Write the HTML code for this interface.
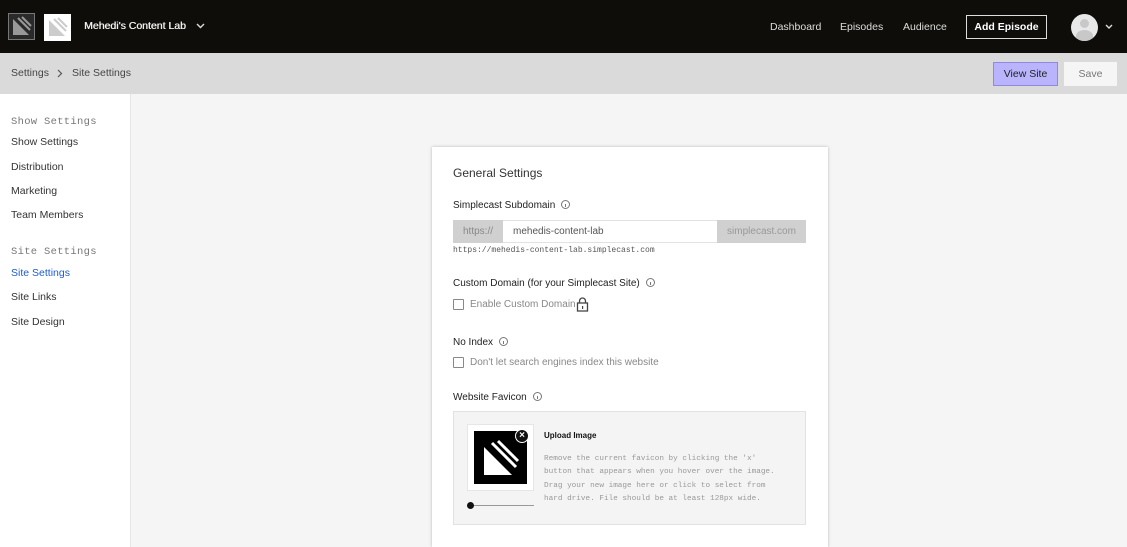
<!DOCTYPE html>
<html><head><meta charset="utf-8"><style>
*{box-sizing:border-box;margin:0;padding:0}
html{width:1127px;height:547px;overflow:hidden}
body{width:1127px;height:547px;overflow:hidden;font-family:"Liberation Sans",sans-serif;background:#f5f5f5;position:relative;color:#222}
.abs{position:absolute}
.top{left:0;top:0;width:1127px;height:53px;background:#0e0d0a}
.sub{left:0;top:53px;width:1127px;height:41px;background:#dadada}
.side{left:0;top:94px;width:131px;height:453px;background:#fff;border-right:1px solid #e6e6e6}
.t{position:absolute;white-space:nowrap}
.mono{font-family:"Liberation Mono",monospace}
.nav{color:#ddd;font-size:10.5px}
.sl{font-size:10.5px;color:#333;left:11px}
.sh{font-size:10.5px;color:#777;left:11px;letter-spacing:.3px}
.card{left:432px;top:147px;width:396px;height:400px;background:#fff;box-shadow:0 0 3px rgba(0,0,0,.25)}
.lbl{font-size:10px;color:#222}
.info{display:inline-block;width:9px;height:9px;border:1px solid #777;border-radius:50%;vertical-align:middle;margin-left:6px;position:relative;top:-1px}
.info:after{content:"";position:absolute;left:3px;top:3px;width:1px;height:3px;background:#777}
.cb{width:11px;height:11px;border:1px solid #888;border-radius:1px;background:#fff}
</style></head><body>
<div class="abs top"></div>
<div class="abs" style="left:8px;top:13px;width:27px;height:27px;border:1px solid #777;background:#2a2a2a">
<svg width="25" height="25" viewBox="0 0 25 25"><polygon points="4,5 4,21 20,21" fill="#999"/><line x1="9" y1="4" x2="21" y2="16" stroke="#999" stroke-width="2"/><line x1="13" y1="3" x2="22" y2="12" stroke="#999" stroke-width="2"/></svg></div>
<div class="abs" style="left:44px;top:14px;width:27px;height:27px;background:#fff">
<svg width="27" height="27" viewBox="0 0 27 27"><polygon points="5,6 5,22 21,22" fill="#ccc"/><line x1="10" y1="5" x2="22" y2="17" stroke="#ccc" stroke-width="2"/><line x1="14" y1="4" x2="23" y2="13" stroke="#ccc" stroke-width="2"/></svg></div>
<div class="t" style="left:84px;top:20px;font-size:10.5px;color:#eee;text-shadow:0.4px 0 0 #eee">Mehedi's Content Lab</div>
<svg class="abs" style="left:196px;top:23px" width="9" height="6"><polyline points="1,1 4.5,4.5 8,1" fill="none" stroke="#ddd" stroke-width="1.4"/></svg>
<div class="t nav" style="left:770px;top:21px">Dashboard</div>
<div class="t nav" style="left:840px;top:21px">Episodes</div>
<div class="t nav" style="left:903px;top:21px">Audience</div>
<div class="abs" style="left:966px;top:15px;width:81px;height:24px;border:1px solid #ddd;color:#fff;font-size:10.5px;font-weight:bold;text-align:center;line-height:22px">Add Episode</div>
<div class="abs" style="left:1071px;top:14px;width:27px;height:27px;border-radius:50%;background:#e8e8e8;overflow:hidden">
<div class="abs" style="left:9px;top:5px;width:9px;height:9px;border-radius:50%;background:#c8c8c8"></div>
<div class="abs" style="left:5px;top:16px;width:17px;height:12px;border-radius:50% 50% 0 0;background:#c8c8c8"></div></div>
<svg class="abs" style="left:1105px;top:24px" width="8" height="6"><polyline points="1,1 4,4 7,1" fill="none" stroke="#ddd" stroke-width="1.4"/></svg>

<div class="abs sub"></div>
<div class="t" style="left:11px;top:67px;font-size:10.5px;color:#444">Settings</div>
<svg class="abs" style="left:57px;top:69px" width="6" height="9"><polyline points="1,1 4.5,4.5 1,8" fill="none" stroke="#555" stroke-width="1.2"/></svg>
<div class="t" style="left:72px;top:67px;font-size:10.5px;color:#444">Site Settings</div>
<div class="abs" style="left:993px;top:62px;width:65px;height:24px;background:#b9b4fb;border:1px solid #8f89e0;font-size:10.5px;text-align:center;line-height:22px;color:#222">View Site</div>
<div class="abs" style="left:1064px;top:62px;width:53px;height:24px;background:#f5f5f5;font-size:10.5px;text-align:center;line-height:24px;color:#777">Save</div>

<div class="abs side"></div>
<div class="t sh mono" style="top:116px">Show Settings</div>
<div class="t sl" style="top:136px">Show Settings</div>
<div class="t sl" style="top:161px">Distribution</div>
<div class="t sl" style="top:185px">Marketing</div>
<div class="t sl" style="top:209px">Team Members</div>
<div class="t sh mono" style="top:246px">Site Settings</div>
<div class="t sl" style="top:267px;color:#1f5bd1">Site Settings</div>
<div class="t sl" style="top:291px">Site Links</div>
<div class="t sl" style="top:316px">Site Design</div>

<div class="abs card"></div>
<div class="t" style="left:453px;top:166px;font-size:12px;color:#333">General Settings</div>
<div class="t lbl" style="left:453px;top:200px">Simplecast Subdomain<span class="info"></span></div>
<div class="abs" style="left:453px;top:220px;width:353px;height:23px;border:1px solid #e2e2e2;background:#fff"></div>
<div class="abs" style="left:453px;top:220px;width:50px;height:23px;background:#d0d0d0;color:#888;font-size:10px;text-align:center;line-height:23px">https://</div>
<div class="t" style="left:513px;top:226px;font-size:10px;color:#555">mehedis-content-lab</div>
<div class="abs" style="left:717px;top:220px;width:89px;height:23px;background:#d0d0d0;color:#999;font-size:10px;text-align:center;line-height:23px">simplecast.com</div>
<div class="t mono" style="left:453px;top:246px;font-size:8px;color:#555">https://mehedis-content-lab.simplecast.com</div>
<div class="t lbl" style="left:453px;top:278px">Custom Domain (for your Simplecast Site)<span class="info"></span></div>
<div class="abs cb" style="left:453px;top:299px"></div>
<div class="t" style="left:470px;top:299px;font-size:10px;color:#888">Enable Custom Domain</div>
<svg class="abs" style="left:576px;top:297px" width="13" height="15" viewBox="0 0 13 15"><path d="M3.5 6V4a3 3 0 0 1 6 0v2" fill="none" stroke="#444" stroke-width="1.3"/><rect x="1.5" y="6" width="10" height="8" fill="none" stroke="#444" stroke-width="1.3"/><rect x="6" y="9" width="1.2" height="3" fill="#444"/></svg>
<div class="t lbl" style="left:453px;top:337px">No Index<span class="info"></span></div>
<div class="abs cb" style="left:453px;top:357px"></div>
<div class="t" style="left:470px;top:357px;font-size:10px;color:#888">Don't let search engines index this website</div>
<div class="t lbl" style="left:453px;top:392px">Website Favicon<span class="info"></span></div>
<div class="abs" style="left:453px;top:411px;width:353px;height:114px;background:#f4f4f4;border:1px solid #e2e2e2"></div>
<div class="abs" style="left:467px;top:424px;width:67px;height:67px;background:#fff;border:1px solid #e6e6e6"></div>
<div class="abs" style="left:474px;top:431px;width:53px;height:53px;background:#000">
<svg width="53" height="53" viewBox="0 0 53 53"><polygon points="10,16 10,44 38,44" fill="#fff"/><line x1="18" y1="12" x2="42" y2="36" stroke="#fff" stroke-width="3"/><line x1="24" y1="10" x2="44" y2="30" stroke="#fff" stroke-width="3"/></svg></div>
<div class="abs" style="left:515px;top:429px;width:14px;height:14px;border-radius:50%;background:#111;border:1.5px solid #fff;color:#fff;font-size:10px;font-weight:bold;text-align:center;line-height:11px">×</div>
<div class="abs" style="left:467px;top:505px;width:67px;height:1px;background:#999"></div>
<div class="abs" style="left:467px;top:502px;width:7px;height:7px;border-radius:50%;background:#111"></div>
<div class="t" style="left:544px;top:431px;font-size:8px;font-weight:bold;color:#111">Upload Image</div>
<div class="t mono" style="left:544px;top:453px;font-size:7.7px;color:#999;line-height:13.3px">Remove the current favicon by clicking the 'x'<br>button that appears when you hover over the image.<br>Drag your new image here or click to select from<br>hard drive. File should be at least 128px wide.</div>
</body></html>
